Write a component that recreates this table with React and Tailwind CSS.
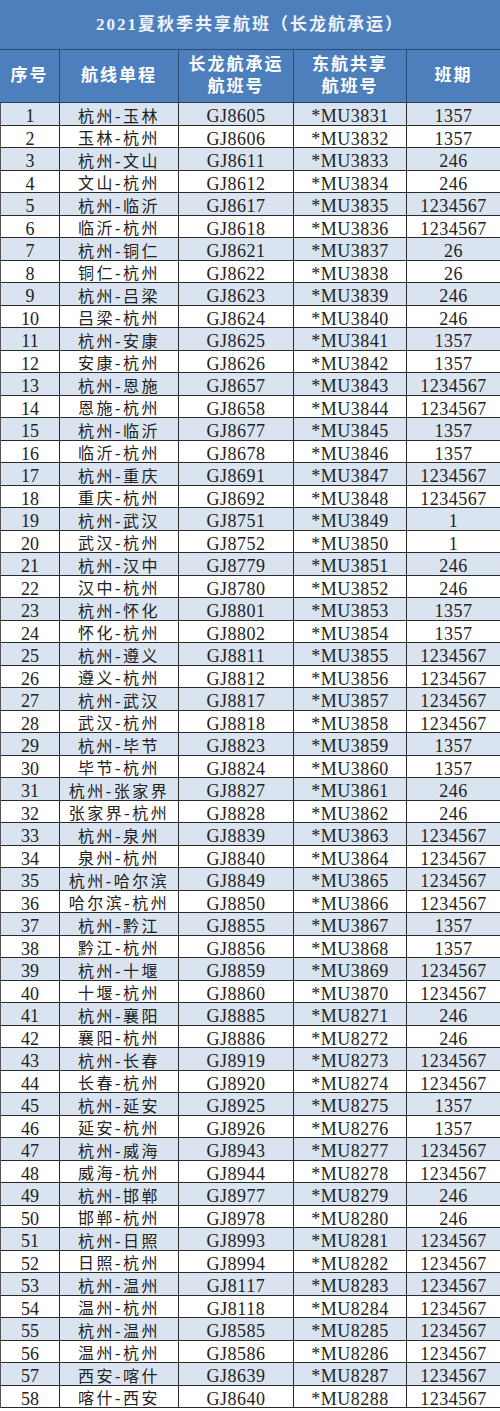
const rows = [
    ["杭州-玉林", "GJ8605", "*MU3831", "1357"],
    ["玉林-杭州", "GJ8606", "*MU3832", "1357"],
    ["杭州-文山", "GJ8611", "*MU3833", "246"],
    ["文山-杭州", "GJ8612", "*MU3834", "246"],
    ["杭州-临沂", "GJ8617", "*MU3835", "1234567"],
    ["临沂-杭州", "GJ8618", "*MU3836", "1234567"],
    ["杭州-铜仁", "GJ8621", "*MU3837", "26"],
    ["铜仁-杭州", "GJ8622", "*MU3838", "26"],
    ["杭州-吕梁", "GJ8623", "*MU3839", "246"],
    ["吕梁-杭州", "GJ8624", "*MU3840", "246"],
    ["杭州-安康", "GJ8625", "*MU3841", "1357"],
    ["安康-杭州", "GJ8626", "*MU3842", "1357"],
    ["杭州-恩施", "GJ8657", "*MU3843", "1234567"],
    ["恩施-杭州", "GJ8658", "*MU3844", "1234567"],
    ["杭州-临沂", "GJ8677", "*MU3845", "1357"],
    ["临沂-杭州", "GJ8678", "*MU3846", "1357"],
    ["杭州-重庆", "GJ8691", "*MU3847", "1234567"],
    ["重庆-杭州", "GJ8692", "*MU3848", "1234567"],
    ["杭州-武汉", "GJ8751", "*MU3849", "1"],
    ["武汉-杭州", "GJ8752", "*MU3850", "1"],
    ["杭州-汉中", "GJ8779", "*MU3851", "246"],
    ["汉中-杭州", "GJ8780", "*MU3852", "246"],
    ["杭州-怀化", "GJ8801", "*MU3853", "1357"],
    ["怀化-杭州", "GJ8802", "*MU3854", "1357"],
    ["杭州-遵义", "GJ8811", "*MU3855", "1234567"],
    ["遵义-杭州", "GJ8812", "*MU3856", "1234567"],
    ["杭州-武汉", "GJ8817", "*MU3857", "1234567"],
    ["武汉-杭州", "GJ8818", "*MU3858", "1234567"],
    ["杭州-毕节", "GJ8823", "*MU3859", "1357"],
    ["毕节-杭州", "GJ8824", "*MU3860", "1357"],
    ["杭州-张家界", "GJ8827", "*MU3861", "246"],
    ["张家界-杭州", "GJ8828", "*MU3862", "246"],
    ["杭州-泉州", "GJ8839", "*MU3863", "1234567"],
    ["泉州-杭州", "GJ8840", "*MU3864", "1234567"],
    ["杭州-哈尔滨", "GJ8849", "*MU3865", "1234567"],
    ["哈尔滨-杭州", "GJ8850", "*MU3866", "1234567"],
    ["杭州-黔江", "GJ8855", "*MU3867", "1357"],
    ["黔江-杭州", "GJ8856", "*MU3868", "1357"],
    ["杭州-十堰", "GJ8859", "*MU3869", "1234567"],
    ["十堰-杭州", "GJ8860", "*MU3870", "1234567"],
    ["杭州-襄阳", "GJ8885", "*MU8271", "246"],
    ["襄阳-杭州", "GJ8886", "*MU8272", "246"],
    ["杭州-长春", "GJ8919", "*MU8273", "1234567"],
    ["长春-杭州", "GJ8920", "*MU8274", "1234567"],
    ["杭州-延安", "GJ8925", "*MU8275", "1357"],
    ["延安-杭州", "GJ8926", "*MU8276", "1357"],
    ["杭州-威海", "GJ8943", "*MU8277", "1234567"],
    ["威海-杭州", "GJ8944", "*MU8278", "1234567"],
    ["杭州-邯郸", "GJ8977", "*MU8279", "246"],
    ["邯郸-杭州", "GJ8978", "*MU8280", "246"],
    ["杭州-日照", "GJ8993", "*MU8281", "1234567"],
    ["日照-杭州", "GJ8994", "*MU8282", "1234567"],
    ["杭州-温州", "GJ8117", "*MU8283", "1234567"],
    ["温州-杭州", "GJ8118", "*MU8284", "1234567"],
    ["杭州-温州", "GJ8585", "*MU8285", "1234567"],
    ["温州-杭州", "GJ8586", "*MU8286", "1234567"],
    ["西安-喀什", "GJ8639", "*MU8287", "1234567"],
    ["喀什-西安", "GJ8640", "*MU8288", "1234567"],
];

const font = "font-['Liberation_Serif','Noto_Sans_CJK_SC',serif]";

const App = () => {
    return (
        <div className={`w-[500px] bg-white ${font}`}>
            {/* title */}
            <div className="h-[50px] bg-[#4d7fbd] border-b border-[#2b4a74] flex items-center justify-center">
                <span className="text-[17px] font-bold tracking-[2px] text-[#eef3fa]">
                    2021夏秋季共享航班（长龙航承运）
                </span>
            </div>

            {/* header */}
            <div className="h-[53px] bg-[#4d7fbd] border-b border-[#2b3d55] grid grid-cols-[60px_119px_115px_113px_93px] text-white text-[17px] font-bold tracking-[2px] leading-[22px]">
                <div className="border-r border-[#2b4a74] flex items-center justify-center">序号</div>
                <div className="border-r border-[#2b4a74] flex items-center justify-center">航线单程</div>
                <div className="border-r border-[#2b4a74] flex flex-col items-center justify-center">
                    <span>长龙航承运</span>
                    <span>航班号</span>
                </div>
                <div className="border-r border-[#2b4a74] flex flex-col items-center justify-center">
                    <span>东航共享</span>
                    <span>航班号</span>
                </div>
                <div className="flex items-center justify-center">班期</div>
            </div>

            {/* body */}
            <div className="border-l border-[#555]">
                {rows.map((r, i) => (
                    <div
                        key={i}
                        className={`h-[22.5px] grid grid-cols-[59px_119px_115px_113px_93px] border-b border-[#2a2a2a] text-[#222] ${
                            i % 2 === 0 ? "bg-[#dae3f0]" : "bg-white"
                        }`}
                    >
                        <div className="border-r border-[#2a2a2a] flex items-center justify-center text-[18px]">
                            {i + 1}
                        </div>
                        <div className="border-r border-[#2a2a2a] flex items-center justify-center text-[16px] tracking-[2.5px]">
                            {r[0]}
                        </div>
                        <div className="border-r border-[#2a2a2a] flex items-center justify-center text-[18px] tracking-[0.5px]">
                            {r[1]}
                        </div>
                        <div className="border-r border-[#2a2a2a] flex items-center justify-center text-[18px] tracking-[0.5px]">
                            {r[2]}
                        </div>
                        <div className="flex items-center justify-center text-[18px] tracking-[0.5px]">
                            {r[3]}
                        </div>
                    </div>
                ))}
            </div>
        </div>
    );
};

export default App;
